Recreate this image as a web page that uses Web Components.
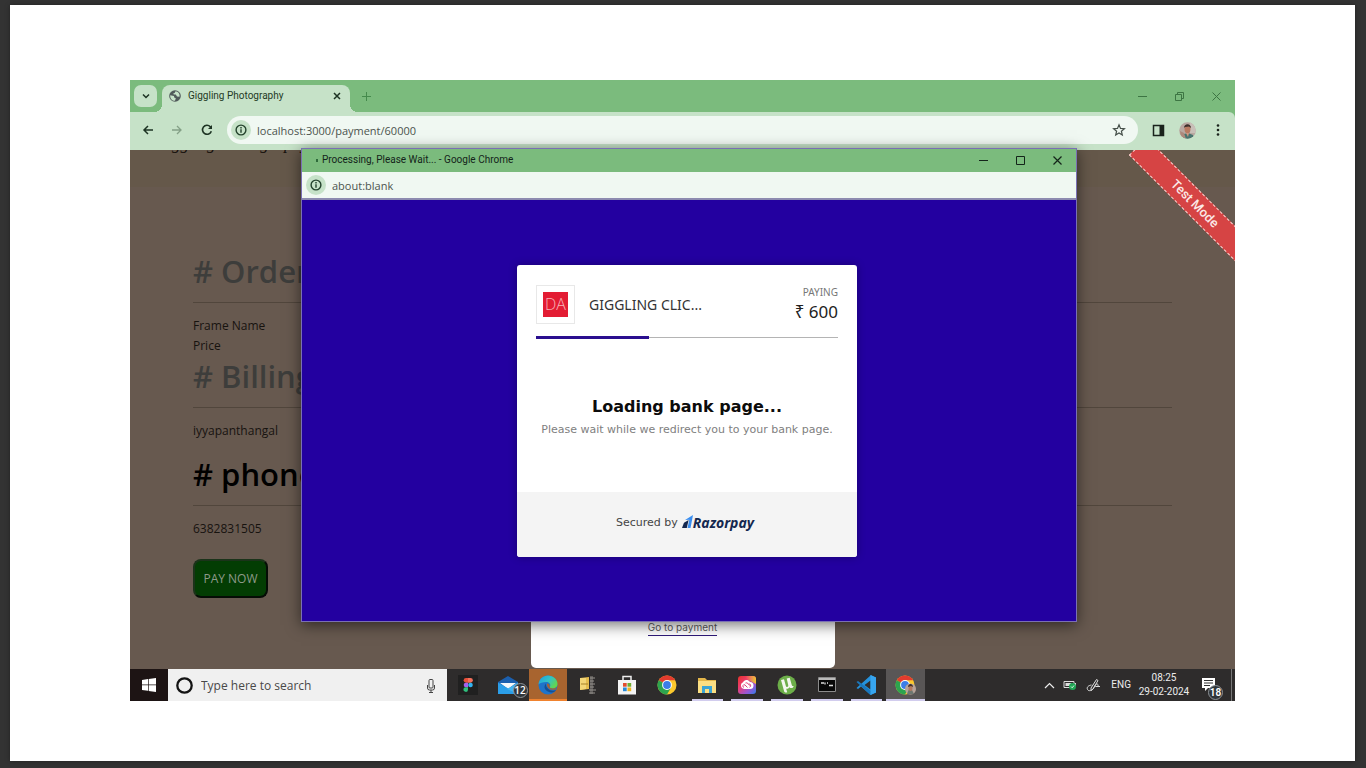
<!DOCTYPE html>
<html lang="en">
<head>
<meta charset="utf-8">
<title>Giggling Photography</title>
<style>
  html { height: 100%; }
  body { margin: 0; min-height: 100%; background: #333; display: flex; font-family: "Open Sans", "Noto Sans", sans-serif; }
</style>
</head>
<body>
<slide-sheet>
  <desktop-screen>
    <chrome-window>
      <order-page></order-page>
    </chrome-window>
    <popup-window slot="popup"><pay-card></pay-card></popup-window>
    <task-bar slot="taskbar"></task-bar>
  </desktop-screen>
</slide-sheet>

<script>
const base = `*{box-sizing:border-box} button{font:inherit;color:inherit;background:none;border:0;padding:0;margin:0;display:grid;place-items:center} input{font:inherit;border:0;padding:0;margin:0;background:none;outline:0;min-width:0} svg{display:block}`;
function define(name, css, html) {
  const tpl = document.createElement('template');
  tpl.innerHTML = `<style>${base}${css}</style>${html}`;
  customElements.define(name, class extends HTMLElement {
    constructor() {
      super();
      this.attachShadow({ mode: 'open' }).append(tpl.content.cloneNode(true));
    }
  });
}
const info = `<svg width="12" height="12" viewBox="0 0 12 12" fill="none" stroke="#23422c" stroke-width="1.4"><circle cx="6" cy="6" r="4.9"/><path d="M6 5.3v3.4M6 3.1v1.3"/></svg>`;

define('slide-sheet', `
  :host{display:block;flex:1;margin:5px 11px 7px 10px;padding:75px 120px 60px;background:#fff;box-shadow:0 0 4px #222}
`, `<slot></slot>`);

define('desktop-screen', `
  :host{display:flex;flex-direction:column;position:relative;overflow:hidden}
  .popup{position:absolute;top:68px;left:171px;right:158px}
`, `<slot></slot><div class="popup"><slot name="popup"></slot></div><slot name="taskbar"></slot>`);

define('chrome-window', `
  :host{display:block}
  .strip{height:32px;background:#7bbb7d;display:flex;align-items:flex-start;padding:5px 13px 0 4px;color:#1f3a25}
  .search{width:23px;height:22px;border-radius:7px;background:#c6e2c8}
  .tab{height:27px;width:188px;margin-left:5px;background:#c6e2c8;border-radius:8px 8px 0 0;display:flex;align-items:center;padding:0 8px 5px 7px;font:10px/14px Roboto,sans-serif;position:relative}
  .tab::before,.tab::after{content:"";position:absolute;bottom:0;width:8px;height:8px}
  .tab::before{right:100%;background:radial-gradient(circle at 0 0,transparent 8px,#c6e2c8 8px)}
  .tab::after{left:100%;background:radial-gradient(circle at 100% 0,transparent 8px,#c6e2c8 8px)}
  .tab span{flex:1;margin-left:7px}
  .plus{margin-left:11px;width:11px;height:22px;color:#458a4c}
  .ctl{margin-left:auto;display:flex;gap:25px;height:22px;color:#3d7543}
  .ctl button{width:12px}
  .bar{height:38px;background:#c6e2c8;display:flex;align-items:center;padding:0 11px 2px;color:#1d3323;border-radius:0 6px 0 0}
  .bar>button{width:13px}
  .fwd{margin:0 17px 0 16px}
  .omni{flex:1;height:28px;margin:0 14px;border-radius:14px;background:#f0f8f2;display:flex;align-items:center;padding:0 12px 0 4px;font-size:11px;color:#4c544e}
  .omni i{width:20px;height:20px;border-radius:50%;background:#c6e2c8;display:grid;place-items:center;margin-right:6px}
  .omni input{flex:1;color:inherit}
  .back{background:#7bbb7d}
  .av{margin:0 15px 0 14px}
  .bar>.av{width:17px}.bar>.menu{width:13px}
`, `<div class="strip">
  <button class="search" aria-label="Search tabs"><svg width="10" height="10" viewBox="0 0 10 10" fill="none" stroke="#1d3323" stroke-width="1.5"><path d="M2 3.5 5 6.5 8 3.5"/></svg></button>
  <div class="tab">
    <svg width="12" height="12" viewBox="0 0 12 12"><circle cx="6" cy="6" r="5.8" fill="#50595a"/><path d="M1.2 5.2 5 6l.2 1.5 1.6.8L6 10.8C3 10.8 1 8.500 1.200 5.200zM6.500 1.300 5.700 3 4.200 3.600l.6 1h2l1.200 1.800 2.500.4C11.200 4 9 1.500 6.500 1.300z" fill="#c6e2c8"/></svg>
    <span>Giggling Photography</span>
    <button aria-label="Close tab"><svg width="10" height="10" viewBox="0 0 10 10" stroke="#1d3323" stroke-width="1.5"><path d="m2 2 6 6M8 2 2 8"/></svg></button>
  </div>
  <button class="plus" aria-label="New tab"><svg width="9" height="9" viewBox="0 0 9 9" stroke="currentColor"><path d="M0 4.500h9M4.500 0v9"/></svg></button>
  <div class="ctl">
    <button aria-label="Minimize"><svg width="9" height="9" stroke="currentColor"><path d="M0 4.500h9"/></svg></button>
    <button aria-label="Restore"><svg width="9" height="9" fill="none" stroke="currentColor"><path d="M.5 2.500h6v6h-6zM2.500 2V.5h6v6H7"/></svg></button>
    <button aria-label="Close"><svg width="9" height="9" stroke="currentColor"><path d="m.5.5 8 8M8.500.5l-8 8"/></svg></button>
  </div>
</div>
<div class="back"><div class="bar">
  <button aria-label="Back"><svg width="12" height="12" viewBox="0 0 12 12" fill="none" stroke="#1d3323" stroke-width="1.5"><path d="M11 6H2M6 2 2 6l4 4"/></svg></button>
  <button class="fwd" aria-label="Forward"><svg width="12" height="12" viewBox="0 0 12 12" fill="none" stroke="#84a087" stroke-width="1.300"><path d="M1 6h9M6 2l4 4-4 4"/></svg></button>
  <button aria-label="Reload"><svg width="12" height="12" viewBox="0 0 12 12" fill="none" stroke="#1d3323" stroke-width="1.600"><path d="M10.300 7.200a4.500 4.500 0 1 1-1-4.500l1.200 1.300"/><path d="M11 1v4H7z" fill="#1d3323" stroke="none"/></svg></button>
  <div class="omni"><i>${info}</i><input aria-label="Address" value="localhost:3000/payment/60000">
    <button aria-label="Bookmark"><svg width="14" height="14" viewBox="0 0 14 14" fill="none" stroke="#46504a" stroke-width="1.200"><path d="m7 1.800 1.500 3.600 3.900.3-3 2.500.9 3.800L7 10l-3.300 2 .9-3.800-3-2.500 3.900-.3z"/></svg></button></div>
  <button aria-label="Side panel"><svg width="13" height="13" viewBox="0 0 13 13"><path d="M1.500 1.500h10v10h-10z" fill="none" stroke="#1a231c" stroke-width="1.500"/><path d="M7.500 1.500h4v10h-4z" fill="#1a231c"/></svg></button>
  <button class="av" aria-label="Profile"><svg width="17" height="17" viewBox="0 0 17 17"><clipPath id="a"><circle cx="8.500" cy="8.500" r="8.300"/></clipPath><g clip-path="url(#a)"><path d="M0 0h17v17H0z" fill="#b9a7a0"/><path d="M11 0h6v11h-6z" fill="#c8bfb8"/><path d="M3 17 5 12l4-1 5 2 1 4z" fill="#48746f"/><path d="M1 9l4 2 2 6H2z" fill="#ad887b"/><ellipse cx="8.500" cy="7" rx="3" ry="4.200" fill="#b87960"/><path d="M5 6c0-5 7-5 7 0L10 4.500 6 5z" fill="#3e302c"/><path d="M7 11h3l-1 4z" fill="#d09680"/></g></svg></button>
  <button class="menu" aria-label="Menu"><svg width="4" height="14" fill="#1a231c"><circle cx="2" cy="2.500" r="1.300"/><circle cx="2" cy="7" r="1.300"/><circle cx="2" cy="11.500" r="1.300"/></svg></button>
</div></div><slot></slot>`);

define('order-page', `
  :host{display:block;position:relative;overflow:hidden;height:519px;background:#67594f;color:#17130f;font-size:12px;line-height:20px}
  header{height:37px;background:#65584a;padding-left:25px;overflow:hidden}
  .brand{margin-top:-16px;font:italic 17px/20px "Liberation Serif",serif;white-space:nowrap;color:#15100c}
  main{padding:66px 63px 0}
  h2{margin:0 0 13px;padding-bottom:13px;border-bottom:1px solid #51463c;font-size:31px;line-height:36px;font-weight:600;color:#3d3d3b}
  p{margin:0}
  .b{margin-top:2px}.c{margin-top:15px;color:#000}
  .pay{margin-top:20px;width:75px;height:39px;border-radius:8px;background:#033d03;border:2px solid;border-color:#1b331a #050c05 #050c05 #1b331a;color:#8e9a8a}
  .ribbon{position:absolute;top:41px;right:-41px;width:162px;height:25px;transform:rotate(45deg);background:#d64444;border:1px dashed #f4d6d2;color:#fbe9e7;font:500 13px/23px Roboto,sans-serif;text-align:center}
  .modal{position:absolute;bottom:1px;left:0;right:0;margin:auto;width:304px;height:62px;background:#fff;border-radius:5px;padding-top:11px;text-align:center}
  a{display:inline-block;font:10px/15px Inter,sans-serif;color:#5c5c5c;text-decoration:none;border-bottom:1px solid #2e1a78}
`, `<header><div class="brand">Giggling Photography</div></header>
<main>
  <h2># Order</h2><p>Frame Name</p><p>Price</p>
  <h2 class="b"># Billing</h2><p>iyyapanthangal</p>
  <h2 class="c"># phone</h2><p>6382831505</p>
  <button class="pay">PAY NOW</button>
</main>
<div class="ribbon">Test Mode</div>
<div class="modal"><a href="#payment">Go to payment</a></div>`);

define('popup-window', `
  :host{display:block;border:1px solid #7a70b4;background:#2300a0;box-shadow:0 3px 14px rgba(0,0,0,.55)}
  .title{height:23px;background:#7bbb7d;display:flex;align-items:center;font:10px/14px Roboto,sans-serif;color:#14241a;padding:0 13px 1px 14px}
  .title i{width:2px;height:3px;background:#2f6b3b;margin-right:4px}
  .title span{flex:1}
  .ctl{display:flex;gap:26px}
  .addr{height:28px;background:#f0f8f2;border-bottom:2px solid #8d8bb0;display:flex;align-items:center;padding-left:4px;font-size:11px;color:#4c544e}
  .addr i{width:20px;height:20px;border-radius:50%;background:#c6e2c8;display:grid;place-items:center;margin-right:6px}
  .addr input{color:inherit;flex:1}
  .body{height:421px;display:flex;align-items:center;justify-content:center;padding-top:1px}
`, `<div class="title"><i></i><span>Processing, Please Wait... - Google Chrome</span>
  <div class="ctl">
    <button aria-label="Minimize"><svg width="11" height="11" stroke="#14241a"><path d="M1 5.500h9"/></svg></button>
    <button aria-label="Maximize"><svg width="11" height="11" fill="none" stroke="#14241a"><path d="M1.500 1.500h8v8h-8z"/></svg></button>
    <button aria-label="Close"><svg width="11" height="11" stroke="#14241a" stroke-width="1.200"><path d="m1.500 1.500 8 8M9.500 1.500l-8 8"/></svg></button>
  </div></div>
<div class="addr"><i>${info}</i><input aria-label="Address" value="about:blank"></div>
<div class="body"><slot></slot></div>`);

define('pay-card', `
  :host{display:block;width:340px;margin-right:4px;background:#fff;border-radius:3px;overflow:hidden;font-family:"DejaVu Sans",sans-serif;box-shadow:0 0 8px rgba(0,0,0,.3)}
  .head{margin:20px 19px 0;height:53px;display:flex;border-bottom:1px solid #b4b4b4;position:relative}
  .head::after{content:"";position:absolute;left:0;bottom:-2px;width:113px;height:3px;background:#2a0f8f}
  .logo{width:39px;height:39px;border:1px solid #e8e8e8;display:grid;place-items:center}
  .logo b{width:25px;height:25px;background:#e31c33;color:#f7b4b8;font:300 16px/25px "Open Sans",sans-serif;text-align:center}
  .name{flex:1;margin-left:14px;font:14px/39px "Noto Sans",sans-serif;color:#333}
  .amt{text-align:right;font:10px/14px "Noto Sans",sans-serif;color:#777}
  .amt strong{display:block;font:17px/26px "Noto Sans",sans-serif;color:#222}
  .mid{height:154px;padding-top:57px;text-align:center}
  h1{margin:0;font:bold 16px/24px "DejaVu Sans",sans-serif;color:#0c0c0c}
  p{margin:0;font-size:11px;line-height:22px;color:#808080}
  footer{height:65px;background:#f4f4f4;display:flex;align-items:center;justify-content:center;font-size:11px;color:#444;padding:0 4px 4px 0}
  footer svg{margin:0 0 2px 4px}
  em{font:italic 700 14px/20px "Open Sans",sans-serif;color:#14284f}
`, `<div class="head"><div class="logo"><b>DA</b></div><div class="name">GIGGLING CLIC...</div><div class="amt">PAYING<strong>₹ 600</strong></div></div>
<div class="mid"><h1>Loading bank page...</h1><p>Please wait while we redirect you to your bank page.</p></div>
<footer><span>Secured by</span><svg width="11" height="13" viewBox="0 0 11 13"><path d="M3 5 11 0 8.500 13H5.500L7.300 4.800z" fill="#3a8ef0"/><path d="M2 7.800 6.600 5 4.800 13H0z" fill="#14284f"/></svg><em>Razorpay</em></footer>`);

define('task-app', `
  :host{display:grid;place-items:center;position:relative;height:32px;margin-right:1px;padding-top:1px;border-bottom:2px solid transparent}
  :host([open]){margin:0 4px 0 4px;border-color:#d2cdee}
  :host([alert]){background:#a8642f;border-color:#f0822e}
  :host([active]){margin:0 1px 0 0;background:#595656}
`, `<slot></slot>`);

const chrome = `<circle cx="10" cy="10" r="9.500" fill="#fcc92d"/><path d="M10 10 1.800 5.200A9.500 9.500 0 0 1 18.200 5.200z" fill="#e33b2e"/><path d="M1.800 5.200A9.500 9.500 0 0 0 10 19.500l4.100-7.100L10 10z" fill="#2da44e"/><path d="M10 5.300h8.200L14 10z" fill="#fcc92d"/><circle cx="10" cy="10" r="4.900" fill="#fff"/><circle cx="10" cy="10" r="3.900" fill="#3b7de8"/>`;
define('task-bar', `
  :host{display:flex;height:32px;background:#2e2c2c;color:#ececec}
  .start{width:38px;background:#1d1414}
  .find{width:279px;background:#f0f0f0;display:flex;align-items:center;padding:1px 11px 0 8px;font-size:12px;color:#444}
  .find input{flex:1;margin-left:8px;color:inherit}
  .find input::placeholder{color:#484848;opacity:1}
  .apps{margin-left:2px;width:477px;display:grid;grid-template-columns:repeat(12,1fr)}
  .n{position:absolute;right:0;bottom:1px;width:15px;height:15px;border-radius:50%;border:1px solid #8d9296;background:#30363b;color:#fff;font-size:10px;line-height:13px;text-align:center;font-weight:600}
  .tray{margin-left:auto;display:flex;align-items:center;font:10px/14px Roboto,sans-serif}
  .tray time{text-align:center;line-height:14px;width:58px;margin:0 8px 0 4px}
  .bell{position:relative;width:22px;height:32px;margin-right:8px}
  .peek{width:4px;height:32px;border-left:1px solid #777}
`, `<button class="start" aria-label="Start"><svg width="14" height="14" viewBox="0 0 14 14" fill="#fff"><path d="M0 2l6-.9v5.500H0zM6.700 1 14 0v6.600H6.700zM0 7.300h6v5.500L0 12zM6.700 7.300H14V14l-7.300-1z"/></svg></button>
<div class="find"><svg width="17" height="17"><circle cx="8.500" cy="8.500" r="7.200" fill="none" stroke="#141414" stroke-width="2.300"/></svg><input aria-label="Search" placeholder="Type here to search"><svg width="10" height="14" fill="none" stroke="#444"><rect x="3" y=".5" width="4" height="8.500" rx="1"/><path d="M1.500 6v3q0 2 2 2h3q2 0 2-2V6M5 11v2M3 13.500h4"/></svg></div>
<div class="apps">
 <task-app><svg width="20" height="20" viewBox="0 0 20 20"><path d="M0 0h20v20H0z" fill="#202020"/><path d="M10 3H8a2.300 2.300 0 0 0 0 4.700h2z" fill="#e8503a"/><path d="M10 3h2.500a2.300 2.300 0 0 1 0 4.700H10z" fill="#f4705c"/><path d="M10 7.700H8a2.300 2.300 0 0 0 0 4.600h2z" fill="#a561f0"/><circle cx="12.500" cy="10" r="2.300" fill="#32b4f2"/><path d="M10 12.300H8a2.300 2.300 0 1 0 2 2.400z" fill="#2fc07d"/></svg></task-app>
 <task-app><svg width="20" height="18" viewBox="0 0 20 18"><path d="M0 6 10 0l10 6v12H0z" fill="#1b5fae"/><path d="M2 7h16L10 13z" fill="#f4f8fb"/><path d="M0 6.500 20 18H0z" fill="#2b9ee8"/><path d="M20 6.500 9 13l11 5z" fill="#43b4f0"/></svg><span class="n">12</span></task-app>
 <task-app alert><svg width="20" height="20" viewBox="0 0 20 20"><defs><linearGradient id="e" x2="1" y2=".6"><stop offset="0" stop-color="#1e9de2"/><stop offset=".55" stop-color="#31c3c6"/><stop offset="1" stop-color="#64d64c"/></linearGradient></defs><circle cx="10" cy="10" r="9.500" fill="#1f74c9"/><path d="M.5 9.500C1 4 5 .5 10 .5s9.500 4 9.500 8.500c0 3-2.500 4.500-5 4.500-2 0-3-1-2.500-2 1-2-.5-4.500-3.500-4.500-4 0-7 1-8 2.500z" fill="url(#e)"/><path d="M8 8.500C4.500 12 7.500 17.500 14 17.500c2 0 3-1 4-2.500-2 1-5 1-7-.5s-3.500-3.500-3-6z" fill="#144f94"/><path d="M9 8.500c2 0 3 1.500 2.700 3-.2 1 .8 2 2.800 2 1.500 0 3-.4 4-1.300l-.7 2c-3 1.800-9.500 0-8.800-5.700z" fill="#a8642f"/></svg></task-app>
 <task-app><svg width="20" height="20" viewBox="0 0 20 20"><path d="M12 1h3v18h-3z" fill="#5f5c5a"/><path d="M12 3h5M12 6h4M12 9h5M12 12h4M11 15h7M11 18h6" stroke="#96928d"/><path d="M2 3 11 2v12l-9 1z" fill="#e5bd4f"/><path d="M2 3h6v11l-6 1z" fill="#f3d677"/><path d="M3 9h7" stroke="#a7812b"/></svg></task-app>
 <task-app><svg width="20" height="20" viewBox="0 0 20 20"><path d="M6 5V1.500h8V5" fill="none" stroke="#eee" stroke-width="1.500"/><path d="M1 5h18v14.500H1z" fill="#f4f4f4"/><path d="M6 8h3.700v3.700H6z" fill="#e24d2e"/><path d="M10.500 8h3.700v3.700h-3.700z" fill="#70ad2f"/><path d="M6 12.500h3.700v3.700H6z" fill="#2889d7"/><path d="M10.500 12.500h3.700v3.700h-3.700z" fill="#f0b41e"/></svg></task-app>
 <task-app><svg width="20" height="20" viewBox="0 0 20 20">${chrome}</svg></task-app>
 <task-app open><svg width="18" height="18" viewBox="0 0 18 18"><path d="M0 2h7l2 2h9v13H0z" fill="#e3b64a"/><path d="M0 5h18v12H0z" fill="#fbdf83"/><path d="M4 10h10v7h-3v-4H7v4H4z" fill="#3aa5d6"/></svg></task-app>
 <task-app open><svg width="18" height="18" viewBox="0 0 18 18"><defs><linearGradient id="c" x2="1" y2="1"><stop offset="0" stop-color="#e63228"/><stop offset=".35" stop-color="#ee3d70"/><stop offset=".7" stop-color="#9856d5"/><stop offset="1" stop-color="#2f7eea"/></linearGradient><linearGradient id="d" x1="0" x2="1"><stop offset=".3" stop-color="#f5c42a" stop-opacity="0"/><stop offset="1" stop-color="#f5c42a"/></linearGradient></defs><rect width="18" height="18" rx="3" fill="url(#c)"/><path d="M3 0h12q3 0 3 3v5z" fill="url(#d)"/><path d="M6 13a3.500 3.500 0 0 1-1-6.700C6 3.500 10 2.800 12 6a3.500 3.500 0 0 1 0 7z" fill="#fff"/><path d="M9.500 11.500 7 9a1.300 1.300 0 1 0-1 2.300M7.500 7c2-1 3 1.500 4 2.500M10.500 8a1.600 1.600 0 1 1 1 3.200" fill="none" stroke="#e0457c"/></svg></task-app>
 <task-app open><svg width="20" height="20" viewBox="0 0 20 20"><circle cx="10" cy="10" r="9.500" fill="#6cae49"/><path d="M4 5l3-.8 1.800 6.500c.5 2 3 1.300 2.400-.7L9.700 3.500l3-.7 2 7c.3 1.300 1 1.500 2 1.100-.7 2.200-2.700 3-4.300 1.300-.8 1.300-2 1.700-3.200 1.500l1 3.500c-1.400.7-2.500.2-3-.8z" fill="#f3f7ee"/></svg></task-app>
 <task-app open><svg width="18" height="15" viewBox="0 0 18 15"><path d="M.5.5h17v14H.5z" fill="#090909" stroke="#8c8c8c"/><path d="M1 1h16v2H1z" fill="#bababa"/><path d="M3 6h3M7 5.500v2M9 6h1M11 8.500h4" stroke="#ddd" stroke-width="1.300"/></svg></task-app>
 <task-app open><svg width="20" height="20" viewBox="0 0 20 20"><path d="M14.500 0 20 2.500v15L14.500 20 5 11.500 2 14 .5 13 14.500.5z" fill="#2592dc"/><path d="M.5 7 2 6l13 10-.5 4z" fill="#1977bd"/><path d="M14.500 5.500v9L8.500 10z" fill="#2e2c2c"/><path d="M14.500 0 20 2.500v15L14.500 20z" fill="#37a5ef"/></svg></task-app>
 <task-app open active><svg width="22" height="20" viewBox="0 0 22 20">${chrome}<circle cx="15.500" cy="14" r="5.500" fill="#b7a299"/><path d="M12 19l2-5 3 1 2 4z" fill="#6d7771"/><ellipse cx="15.500" cy="13" rx="2" ry="3" fill="#b5785d"/><path d="M13 12c0-4 5-4 5 0l-2-1z" fill="#3d302b"/></svg></task-app>
</div>
<div class="tray">
 <svg width="11" height="7" fill="none" stroke="#eee" stroke-width="1.200"><path d="m1 6 4.500-4.500L10 6"/></svg>
 <svg style="margin-left:8px" width="14" height="12" viewBox="0 0 14 12"><path d="M1 2.500h10v6H1z" fill="none" stroke="#ddd"/><path d="M2.500 4h6v3h-6zM11.500 4H13v3h-1.500z" fill="#ddd"/><circle cx="9.500" cy="7.500" r="3.500" fill="#21a555"/><path d="m8 7.500 1.200 1.300L11 6.500" fill="none" stroke="#d8f3df"/></svg>
 <svg style="margin-left:9px" width="15" height="14" viewBox="0 0 15 14" fill="none" stroke="#ddd"><path d="M5 10 10.500 1.500l1.500 1L7 11l-2 1.500zM5.500 7C2 7.500.5 9.500 1.500 11.500s5 1.500 6.500-2 3-4 4-3-1 2.500-2.500 2H14"/></svg>
 <span style="margin-left:10px">ENG</span>
 <time>08:25<br>29-02-2024</time>
 <div class="bell"><svg width="15" height="26" viewBox="0 0 15 26"><path d="M1 9h13v10H7l-3 3v-3H1z" fill="#fff"/><path d="M3 11.500h9M3 14h9M3 16.500h6" stroke="#333"/></svg><span class="n">18</span></div>
 <div class="peek"></div>
</div>`);
</script>
</body>
</html>
